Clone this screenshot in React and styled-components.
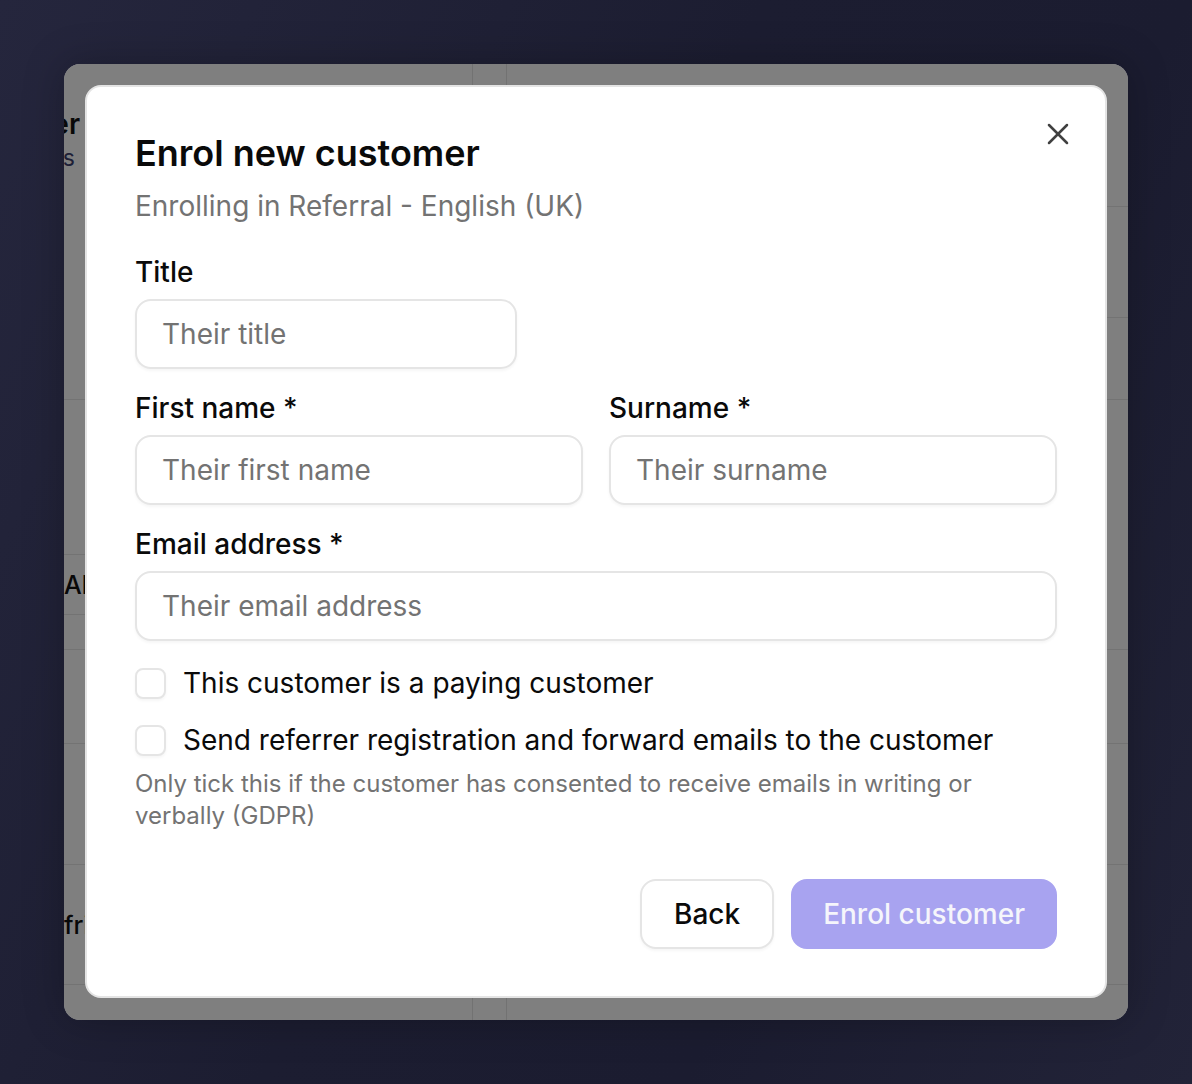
import React, { useState } from "react";
import styled, { createGlobalStyle } from "styled-components";
import { X } from "lucide-react";

const GlobalStyle = createGlobalStyle`
  * { box-sizing: border-box; }
  html, body { margin: 0; padding: 0; }
  body {
    font-family: Inter, "Noto Sans", "Liberation Sans", sans-serif;
    -webkit-font-smoothing: antialiased;
  }
`;

const Page = styled.div`
  width: 1192px;
  height: 1084px;
  padding: 64px;
  background: linear-gradient(115deg, #25263d 0%, #1c1d31 45%, #1b1c30 70%, #222338 100%);
`;

const AppFrame = styled.div`
  position: relative;
  height: 956px;
  border-radius: 16px;
  overflow: hidden;
  background: #ffffff;
  box-shadow: 0 0 40px rgba(0, 0, 0, 0.25);
`;

/* the app that sits under the dimmed overlay */
const AppBehind = styled.div`
  display: grid;
  grid-template-columns: 409px 34px 1fr;
  height: 100%;
`;

const BgColumn = styled.div`
  display: flex;
  flex-direction: column;
  border-right: ${p => (p.$divider ? "1px solid #e4e4e4" : "none")};
`;

const BgGutter = styled.div`
  border-right: 1px solid #e4e4e4;
`;

const BgRow = styled.div`
  height: ${p => p.$h}px;
  flex-shrink: 0;
  border-bottom: 1px solid #e6e6e6;
  display: flex;
  flex-direction: column;
  justify-content: ${p => (p.$top ? "flex-start" : "center")};
  padding-top: ${p => (p.$top ? 42 : 0)}px;
`;

const BgHeading = styled.div`
  width: ${p => p.$w}px;
  display: flex;
  justify-content: flex-end;
  white-space: nowrap;
  font-size: ${p => (p.$sub ? 23 : 28)}px;
  line-height: ${p => (p.$sub ? 32 : 36)}px;
  font-weight: ${p => (p.$sub ? 400 : 600)};
  color: ${p => (p.$sub ? "#3d3f6e" : "#111111")};
`;

const BgText = styled.div`
  white-space: nowrap;
  font-size: 25px;
  font-weight: 500;
  color: #111111;
`;

const Overlay = styled.div`
  position: absolute;
  inset: 0;
  background: rgba(0, 0, 0, 0.5);
  padding: 21px 21px 22px;
  display: flex;
`;

const Modal = styled.div`
  position: relative;
  flex: 1;
  display: flex;
  flex-direction: column;
  background: #ffffff;
  border: 2px solid #e4e4e4;
  border-radius: 16px;
  padding: 48px 48px 47px;
`;

const CloseButton = styled.button`
  position: absolute;
  top: 29px;
  right: 29px;
  width: 36px;
  height: 36px;
  padding: 0;
  border: none;
  background: transparent;
  color: #404040;
  display: flex;
  align-items: center;
  justify-content: center;
  cursor: pointer;
`;

const Title = styled.h2`
  margin: 0;
  font-size: 36px;
  line-height: 36px;
  font-weight: 600;
  color: #0a0a0a;
`;

const Subtitle = styled.p`
  margin: 19px 0 0;
  font-size: 28px;
  line-height: 32px;
  color: #737373;
`;

const Form = styled.div`
  margin-top: 34px;
  display: flex;
  flex-direction: column;
  gap: 23px;
`;

const Field = styled.label`
  display: flex;
  flex-direction: column;
  gap: 11px;
  width: ${p => (p.$width ? `${p.$width}px` : "auto")};
`;

const Label = styled.span`
  font-size: 28px;
  line-height: 32px;
  font-weight: 500;
  color: #0a0a0a;
`;

const Input = styled.input`
  height: 70px;
  width: 100%;
  border: 2px solid #e5e5e5;
  border-radius: 16px;
  padding: 0 25px;
  font-family: inherit;
  font-size: 28px;
  color: #0a0a0a;
  background: #ffffff;
  box-shadow: 0 2px 3px rgba(0, 0, 0, 0.04);
  outline: none;

  &::placeholder {
    color: #737373;
  }
`;

const TwoCol = styled.div`
  display: grid;
  grid-template-columns: 1fr 1fr;
  gap: 26px;
`;

const Checks = styled.div`
  margin-top: 26px;
  display: flex;
  flex-direction: column;
  gap: 25px;
`;

const CheckRow = styled.label`
  display: flex;
  align-items: center;
  gap: 17px;
  cursor: pointer;
`;

const Box = styled.span`
  width: 31px;
  height: 31px;
  flex-shrink: 0;
  border: 2px solid #e5e5e5;
  border-radius: 8px;
  background: ${p => (p.$checked ? "#6b63e6" : "#ffffff")};
  box-shadow: 0 2px 3px rgba(0, 0, 0, 0.04);
`;

const CheckText = styled.span`
  font-size: 28px;
  line-height: 32px;
  color: #0a0a0a;
`;

const Help = styled.p`
  margin: 12px 0 0;
  max-width: 900px;
  font-size: 24px;
  line-height: 32px;
  color: #737373;
`;

const Footer = styled.div`
  margin-top: auto;
  display: flex;
  justify-content: flex-end;
  gap: 17px;
`;

const Button = styled.button`
  height: 70px;
  padding: 0 ${p => (p.$primary ? 30 : 32)}px;
  border-radius: 16px;
  border: 2px solid ${p => (p.$primary ? "#a8a3f0" : "#e5e5e5")};
  background: ${p => (p.$primary ? "#a8a3f0" : "#ffffff")};
  color: ${p => (p.$primary ? "#f5f5fb" : "#0a0a0a")};
  font-family: inherit;
  font-size: 28px;
  font-weight: 500;
  box-shadow: ${p => (p.$primary ? "none" : "0 2px 3px rgba(0, 0, 0, 0.04)")};
  cursor: ${p => (p.$primary ? "not-allowed" : "pointer")};
`;

const leftRows = [336, 155, 60, 35, 94, 121, 120];
const rightRows = [143, 111, 82, 250, 94, 121, 120];

const Checkbox = ({ checked, onToggle, children }) => (
  <CheckRow onClick={onToggle}>
    <Box $checked={checked} />
    <CheckText>{children}</CheckText>
  </CheckRow>
);

const App = () => {
  const [paying, setPaying] = useState(false);
  const [sendEmails, setSendEmails] = useState(false);

  return (
    <Page>
      <GlobalStyle />
      <AppFrame>
        <AppBehind>
          <BgColumn $divider>
            {leftRows.map((h, i) => (
              <BgRow key={i} $h={h} $top={i === 0}>
                {i === 0 && (
                  <>
                    <BgHeading $w={16}>Customer</BgHeading>
                    <BgHeading $w={11} $sub>
                      Referrals
                    </BgHeading>
                  </>
                )}
                {i === 2 && <BgText>All</BgText>}
                {i === 6 && <BgText>friends</BgText>}
              </BgRow>
            ))}
          </BgColumn>
          <BgGutter />
          <BgColumn>
            {rightRows.map((h, i) => (
              <BgRow key={i} $h={h} />
            ))}
          </BgColumn>
        </AppBehind>

        <Overlay>
          <Modal>
            <CloseButton aria-label="Close">
              <X size={36} strokeWidth={1.7} />
            </CloseButton>

            <Title>Enrol new customer</Title>
            <Subtitle>Enrolling in Referral - English (UK)</Subtitle>

            <Form>
              <Field $width={382}>
                <Label>Title</Label>
                <Input placeholder="Their title" />
              </Field>
              <TwoCol>
                <Field>
                  <Label>First name *</Label>
                  <Input placeholder="Their first name" />
                </Field>
                <Field>
                  <Label>Surname *</Label>
                  <Input placeholder="Their surname" />
                </Field>
              </TwoCol>
              <Field>
                <Label>Email address *</Label>
                <Input placeholder="Their email address" />
              </Field>
            </Form>

            <Checks>
              <Checkbox checked={paying} onToggle={() => setPaying(!paying)}>
                This customer is a paying customer
              </Checkbox>
              <Checkbox checked={sendEmails} onToggle={() => setSendEmails(!sendEmails)}>
                Send referrer registration and forward emails to the customer
              </Checkbox>
            </Checks>
            <Help>
              Only tick this if the customer has consented to receive emails in writing or
              verbally (GDPR)
            </Help>

            <Footer>
              <Button>Back</Button>
              <Button $primary disabled>
                Enrol customer
              </Button>
            </Footer>
          </Modal>
        </Overlay>
      </AppFrame>
    </Page>
  );
};

export default App;
